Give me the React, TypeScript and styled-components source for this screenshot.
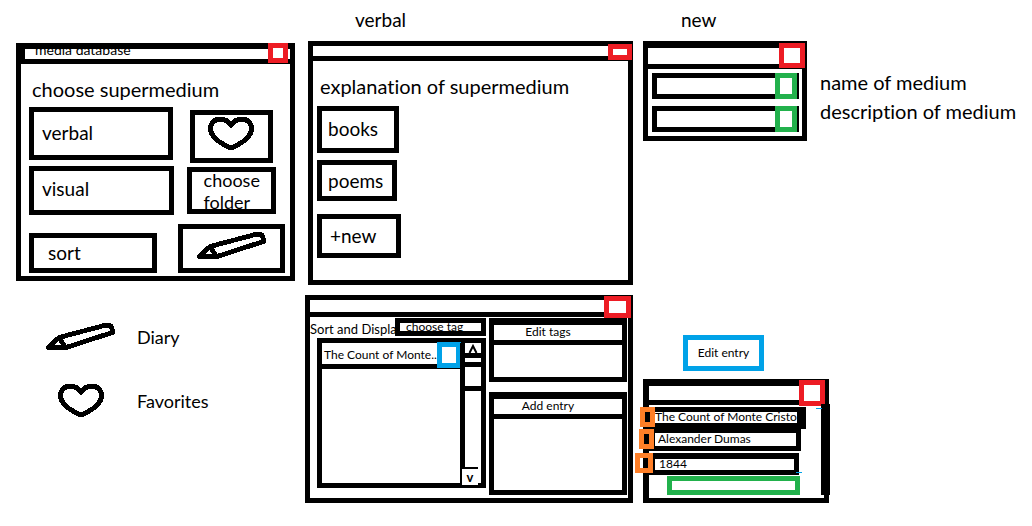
import React from "react";
import styled, { createGlobalStyle } from "styled-components";

const ink = "#000000";
const red = "#ed1c24";
const green = "#22b14c";
const blue = "#00a2e8";
const orange = "#ff7f27";

const GlobalStyle = createGlobalStyle`
  *, *::before, *::after { box-sizing: border-box; }
  body {
    margin: 0;
    background: #ffffff;
    color: ${ink};
    font-family: Lato, "Liberation Sans", sans-serif;
    font-size: 18px;
    font-variant-ligatures: none;
    line-height: 22px;
  }
  button, input { font: inherit; color: inherit; margin: 0; border-radius: 0; }
`;

const Board = styled.main`
  display: grid;
  grid-template-columns: minmax(0, 279fr) minmax(0, 328fr) minmax(0, 371fr);
  column-gap: 10px;
  padding: 9px 18px 20px 16px;
`;

const Column = styled.section<{ $top?: number; $spread?: boolean }>`
  display: flex;
  flex-direction: column;
  justify-content: ${(p) => (p.$spread ? "space-between" : "flex-start")};
  padding-top: ${(p) => p.$top ?? 0}px;
`;

const Caption = styled.h2<{ $indent: number }>`
  margin: 0 0 10px;
  padding-left: ${(p) => p.$indent}px;
  font-size: 19px;
  font-weight: 400;
`;

const Window = styled.div<{ $trim?: number }>`
  position: relative;
  align-self: flex-end;
  width: calc(100% - ${(p) => p.$trim ?? 0}px);
  border: 5px solid ${ink};
  background: #ffffff;
`;

const TitleBar = styled.header<{ $height: number; $top?: number; $left?: number }>`
  display: flex;
  align-items: flex-end;
  box-sizing: content-box;
  height: ${(p) => p.$height}px;
  overflow: hidden;
  border: 0 solid ${ink};
  border-width: ${(p) => p.$top ?? 0}px 0 5px ${(p) => p.$left ?? 0}px;
`;

const WindowTitle = styled.span`
  padding-left: 10px;
  font-size: 14px;
  line-height: 18px;
`;

const CloseButton = styled.button<{ $width: number; $height: number; $right: number; $top: number }>`
  position: absolute;
  top: ${(p) => p.$top}px;
  right: ${(p) => p.$right}px;
  width: ${(p) => p.$width}px;
  height: ${(p) => p.$height}px;
  padding: 0;
  border: 5px solid ${red};
  background: #ffffff;
`;

const Body = styled.div<{ $pad: string }>`
  padding: ${(p) => p.$pad};
`;

const Heading = styled.p<{ $gap: number }>`
  margin: 0 0 ${(p) => p.$gap}px;
  padding-left: 3px;
  font-size: 20px;
  white-space: nowrap;
`;

const Choices = styled.div`
  display: grid;
  grid-template-columns: minmax(0, 145fr) minmax(0, 107fr);
  column-gap: 4px;
`;

const Stack = styled.div<{ $align?: string; $top?: number }>`
  display: flex;
  flex-direction: column;
  align-items: ${(p) => p.$align ?? "flex-start"};
  padding-top: ${(p) => p.$top ?? 0}px;
`;

const BoxButton = styled.button<{
  $width: string;
  $height: number;
  $size?: number;
  $gap?: number;
  $indent?: number;
  $lift?: number;
}>`
  display: flex;
  align-items: center;
  justify-content: ${(p) => (p.$indent === undefined ? "center" : "flex-start")};
  width: ${(p) => p.$width};
  height: ${(p) => p.$height}px;
  margin-top: ${(p) => p.$gap ?? 0}px;
  padding: 0 0 ${(p) => p.$lift ?? 0}px ${(p) => p.$indent ?? 0}px;
  overflow: hidden;
  border: 5px solid ${ink};
  background: #ffffff;
  font-size: ${(p) => p.$size ?? 19}px;
  text-align: left;
`;

const Legend = styled.ul`
  display: flex;
  flex-direction: column;
  gap: 32px;
  margin: 42px 0 0;
  padding: 0 0 0 30px;
  list-style: none;
`;

const LegendItem = styled.li`
  display: grid;
  grid-template-columns: 70px auto;
  column-gap: 21px;
  align-items: center;
  justify-items: center;
  justify-content: start;

  svg { display: block; }
  span { justify-self: start; }
`;

const Browser = styled.div`
  display: grid;
  grid-template-columns: minmax(0, 176fr) minmax(0, 138fr);
  column-gap: 3px;
  padding: 1px 1px 3px 0;
  font-size: 12px;
  line-height: 16px;
`;

const Toolbar = styled.div`
  display: flex;
  height: 18px;
  margin-bottom: 2px;
`;

const ToolbarLabel = styled.span`
  flex: 1;
  overflow: hidden;
  white-space: nowrap;
  font-size: 13px;
  line-height: 22px;
`;

const List = styled.div`
  display: flex;
  height: 150px;
  margin-left: 7px;
  border: 5px solid ${ink};
`;

const Entries = styled.div`
  flex: 1;
  min-width: 0;
`;

const Entry = styled.div`
  position: relative;
  display: flex;
  align-items: center;
  height: 26px;
  padding: 2px 0 0 2px;
  border-bottom: 5px solid ${ink};
  white-space: nowrap;
`;

const EntryAction = styled.button`
  position: absolute;
  top: -1px;
  right: -1px;
  width: 24px;
  height: 26px;
  padding: 0;
  border: 5px solid ${blue};
  background: #ffffff;
`;

const ScrollBar = styled.div`
  position: relative;
  display: flex;
  flex-direction: column;
  width: 21px;
  border-left: 5px solid ${ink};
`;

const ScrollUp = styled.button`
  display: flex;
  align-items: flex-end;
  justify-content: center;
  height: 15px;
  padding: 0;
  border: 0;
  border-bottom: 5px solid ${ink};
  background: #ffffff;
`;

const ScrollThumb = styled.div`
  height: 29px;
  margin-top: 4px;
  border: solid ${ink};
  border-width: 5px 0;
`;

const ScrollDown = styled.button`
  position: absolute;
  left: -3px;
  bottom: -2px;
  width: 16px;
  height: 18px;
  padding: 0;
  border: 0;
  border-top: 2px solid ${ink};
  background: #ffffff;
  font-size: 13px;
  font-weight: 700;
  line-height: 14px;
`;

const Panel = styled.section<{ $height: number }>`
  height: ${(p) => p.$height}px;
  border: 5px solid ${ink};
  border-top-width: 7px;

  & + & { margin-top: 10px; }
`;

const PanelTitle = styled.h3`
  margin: 0;
  padding: 0 20px 2px 0;
  border-bottom: 5px solid ${ink};
  font-size: 12px;
  font-weight: 400;
  line-height: 13px;
  text-align: center;
`;

const FormRow = styled.div`
  display: grid;
  grid-template-columns: minmax(0, 164fr) minmax(0, 194fr);
  column-gap: 13px;
  align-items: start;
`;

const Labels = styled.div`
  display: flex;
  flex-direction: column;
  gap: 7px;
  padding-top: 30px;
  font-size: 20px;
  white-space: nowrap;
`;

const Field = styled.div`
  position: relative;

  & + & { margin-top: 7px; }
`;

const FieldInput = styled.input`
  display: block;
  width: 100%;
  height: 26px;
  padding: 0 24px 0 4px;
  border: 5px solid ${ink};
  background: #ffffff;
  font-size: 12px;
`;

const FieldAction = styled.button`
  position: absolute;
  top: 0;
  right: 2px;
  width: 22px;
  height: 26px;
  padding: 0;
  border: 5px solid ${green};
  background: #ffffff;
`;

const EditEntry = styled.button`
  display: block;
  width: 81px;
  height: 36px;
  margin: 0 0 8px 40px;
  padding: 0;
  border: 5px solid ${blue};
  background: #ffffff;
  font-size: 12px;
  line-height: 16px;
`;

const EntryWindow = styled(Window)`
  width: 50%;
  border-left-width: 6px;
`;

const EntryField = styled.div<{ $gap?: number }>`
  position: relative;
  margin-top: ${(p) => p.$gap ?? 0}px;
`;

const EntryInput = styled.input<{ $width: string; $border: string; $indent: number }>`
  display: block;
  width: ${(p) => p.$width};
  height: 22px;
  padding: 0 0 2px ${(p) => p.$indent}px;
  border: solid ${ink};
  border-width: ${(p) => p.$border};
  background: #ffffff;
  font-size: 12px;
  line-height: 12px;
`;

const Tab = styled.button<{ $left: number; $width: number }>`
  position: absolute;
  top: 0;
  left: ${(p) => p.$left}px;
  width: ${(p) => p.$width}px;
  height: 20px;
  padding: 0;
  border: 5px solid ${orange};
  background: transparent;
`;

const Submit = styled.button`
  display: block;
  width: 133px;
  height: 19px;
  margin: 1px 0 0 18px;
  padding: 0;
  border: 5px solid ${green};
  background: #ffffff;
`;

const EdgeBar = styled.div`
  position: absolute;
  top: 20px;
  right: -6px;
  bottom: 3px;
  width: 9px;
  background: ${ink};
`;

const Tick = styled.i<{ $left: number; $top: number }>`
  position: absolute;
  left: ${(p) => p.$left}px;
  top: ${(p) => p.$top}px;
  width: 6px;
  height: 1px;
  background: ${blue};
`;

function HeartIcon() {
  return (
    <svg width="46" height="35" viewBox="0 0 46 35" fill="none" stroke={ink} strokeWidth="5" strokeLinejoin="round" shapeRendering="crispEdges" aria-hidden="true">
      <path d="M23 9.5C20 5 16.5 3 12.5 3C6.5 3 2.5 7 2.5 12.5C2.5 20 10 26.5 23 32C36 26.5 43.5 20 43.5 12.5C43.5 7 39.5 3 33.5 3C29.5 3 26 5 23 9.5Z" />
    </svg>
  );
}

function PencilIcon() {
  return (
    <svg width="70" height="28" viewBox="0 0 70 28" fill="none" stroke={ink} strokeWidth="4.8" strokeLinejoin="round" strokeLinecap="round" shapeRendering="crispEdges" aria-hidden="true">
      <path d="M2.5 24.5L18.5 25L67 9.3L64.8 2.8L58 2.6L13 14.5Z M14 15.5L19 24.5" />
    </svg>
  );
}

export default function App() {
  return (
    <>
      <GlobalStyle />
      <Board>
        <Column $top={34}>
          <Window>
            <TitleBar $height={10} $top={1} $left={4}>
              <WindowTitle>media database</WindowTitle>
            </TitleBar>
            <CloseButton $width={20} $height={20} $right={2} $top={-5} aria-label="Close" />
            <Body $pad="14px 5px 3px 8px">
              <Heading $gap={7}>choose supermedium</Heading>
              <Choices>
                <Stack>
                  <BoxButton $width="99%" $height={53} $indent={8} $lift={2}>verbal</BoxButton>
                  <BoxButton $width="100%" $height={49} $gap={6} $indent={8} $lift={4}>visual</BoxButton>
                  <BoxButton $width="88%" $height={40} $gap={18} $indent={14}>sort</BoxButton>
                </Stack>
                <Stack $align="center" $top={3}>
                  <BoxButton $width="78%" $height={53} $lift={6} aria-label="Favorites"><HeartIcon /></BoxButton>
                  <BoxButton $width="84%" $height={47} $size={18} $gap={4} $indent={12}>choose folder</BoxButton>
                  <BoxButton $width="100%" $height={49} $gap={10} $lift={6} aria-label="Diary"><PencilIcon /></BoxButton>
                </Stack>
              </Choices>
            </Body>
          </Window>
          <Legend>
            <LegendItem><PencilIcon /><span>Diary</span></LegendItem>
            <LegendItem><HeartIcon /><span>Favorites</span></LegendItem>
          </Legend>
        </Column>

        <Column>
          <Caption $indent={50}>verbal</Caption>
          <Window $trim={3}>
            <TitleBar $height={10} />
            <CloseButton $width={24} $height={16} $right={-4} $top={-2} aria-label="Close" />
            <Body $pad="14px 5px 22px 4px">
              <Heading $gap={9}>explanation of supermedium</Heading>
              <Stack>
                <BoxButton $width="82px" $height={47} $indent={6} $lift={2}>books</BoxButton>
                <BoxButton $width="80px" $height={41} $gap={7} $indent={6}>poems</BoxButton>
                <BoxButton $width="84px" $height={44} $gap={13} $indent={8}>+new</BoxButton>
              </Stack>
            </Body>
          </Window>
          <Column $top={10}>
            <Window>
              <TitleBar $height={12} />
              <CloseButton $width={27} $height={22} $right={-3} $top={-4} aria-label="Close" />
              <Browser>
                <div>
                  <Toolbar>
                    <ToolbarLabel>Sort and Display</ToolbarLabel>
                    <BoxButton $width="91px" $height={18} $size={12} $indent={6}>choose tag</BoxButton>
                  </Toolbar>
                  <List>
                    <Entries>
                      <Entry>
                        The Count of Monte..
                        <EntryAction aria-label="Edit entry" />
                      </Entry>
                    </Entries>
                    <ScrollBar>
                      <ScrollUp aria-label="Scroll up">
                        <svg width="10" height="9" viewBox="0 0 10 9" fill="none" stroke={ink} strokeWidth="2" aria-hidden="true">
                          <path d="M1.5 9L5 2L8.5 9" />
                        </svg>
                      </ScrollUp>
                      <ScrollThumb />
                      <ScrollDown aria-label="Scroll down">v</ScrollDown>
                    </ScrollBar>
                  </List>
                </div>
                <div>
                  <Panel $height={64}><PanelTitle>Edit tags</PanelTitle></Panel>
                  <Panel $height={103}><PanelTitle>Add entry</PanelTitle></Panel>
                </div>
              </Browser>
            </Window>
          </Column>
        </Column>

        <Column $spread>
          <div>
            <Caption $indent={38}>new</Caption>
            <FormRow>
              <Window>
                <TitleBar $height={16} $top={2} />
                <CloseButton $width={26} $height={25} $right={-3} $top={-3} aria-label="Close" />
                <Body $pad="4px 3px 4px 4px">
                  <Field>
                    <FieldInput id="medium-name" />
                    <FieldAction aria-label="Confirm name" />
                  </Field>
                  <Field>
                    <FieldInput id="medium-description" />
                    <FieldAction aria-label="Confirm description" />
                  </Field>
                </Body>
              </Window>
              <Labels>
                <label htmlFor="medium-name">name of medium</label>
                <label htmlFor="medium-description">description of medium</label>
              </Labels>
            </FormRow>
          </div>
          <div>
            <EditEntry>Edit entry</EditEntry>
            <EntryWindow>
              <TitleBar $height={14} $top={2} />
              <CloseButton $width={26} $height={26} $right={-1} $top={-4} aria-label="Close" />
              <EdgeBar />
              <Body $pad="2px 0 3px">
                <EntryField>
                  <EntryInput $width="90%" $border="5px 9px 6px 6px" $indent={0} defaultValue="The Count of Monte Cristo" aria-label="Title" />
                  <Tab $left={-9} $width={15} aria-label="Edit title" />
                  <Tick $left={167} $top={1} />
                </EntryField>
                <EntryField>
                  <EntryInput $width="87%" $border="4px 5px 5px 6px" $indent={3} defaultValue="Alexander Dumas" aria-label="Author" />
                  <Tab $left={-10} $width={15} aria-label="Edit author" />
                </EntryField>
                <EntryField $gap={2}>
                  <EntryInput $width="86%" $border="6px 5px 5px 6px" $indent={4} defaultValue="1844" aria-label="Year" />
                  <Tab $left={-14} $width={18} aria-label="Edit year" />
                  <Tick $left={147} $top={19} />
                </EntryField>
                <Submit aria-label="Save entry" />
              </Body>
            </EntryWindow>
          </div>
        </Column>
      </Board>
    </>
  );
}
